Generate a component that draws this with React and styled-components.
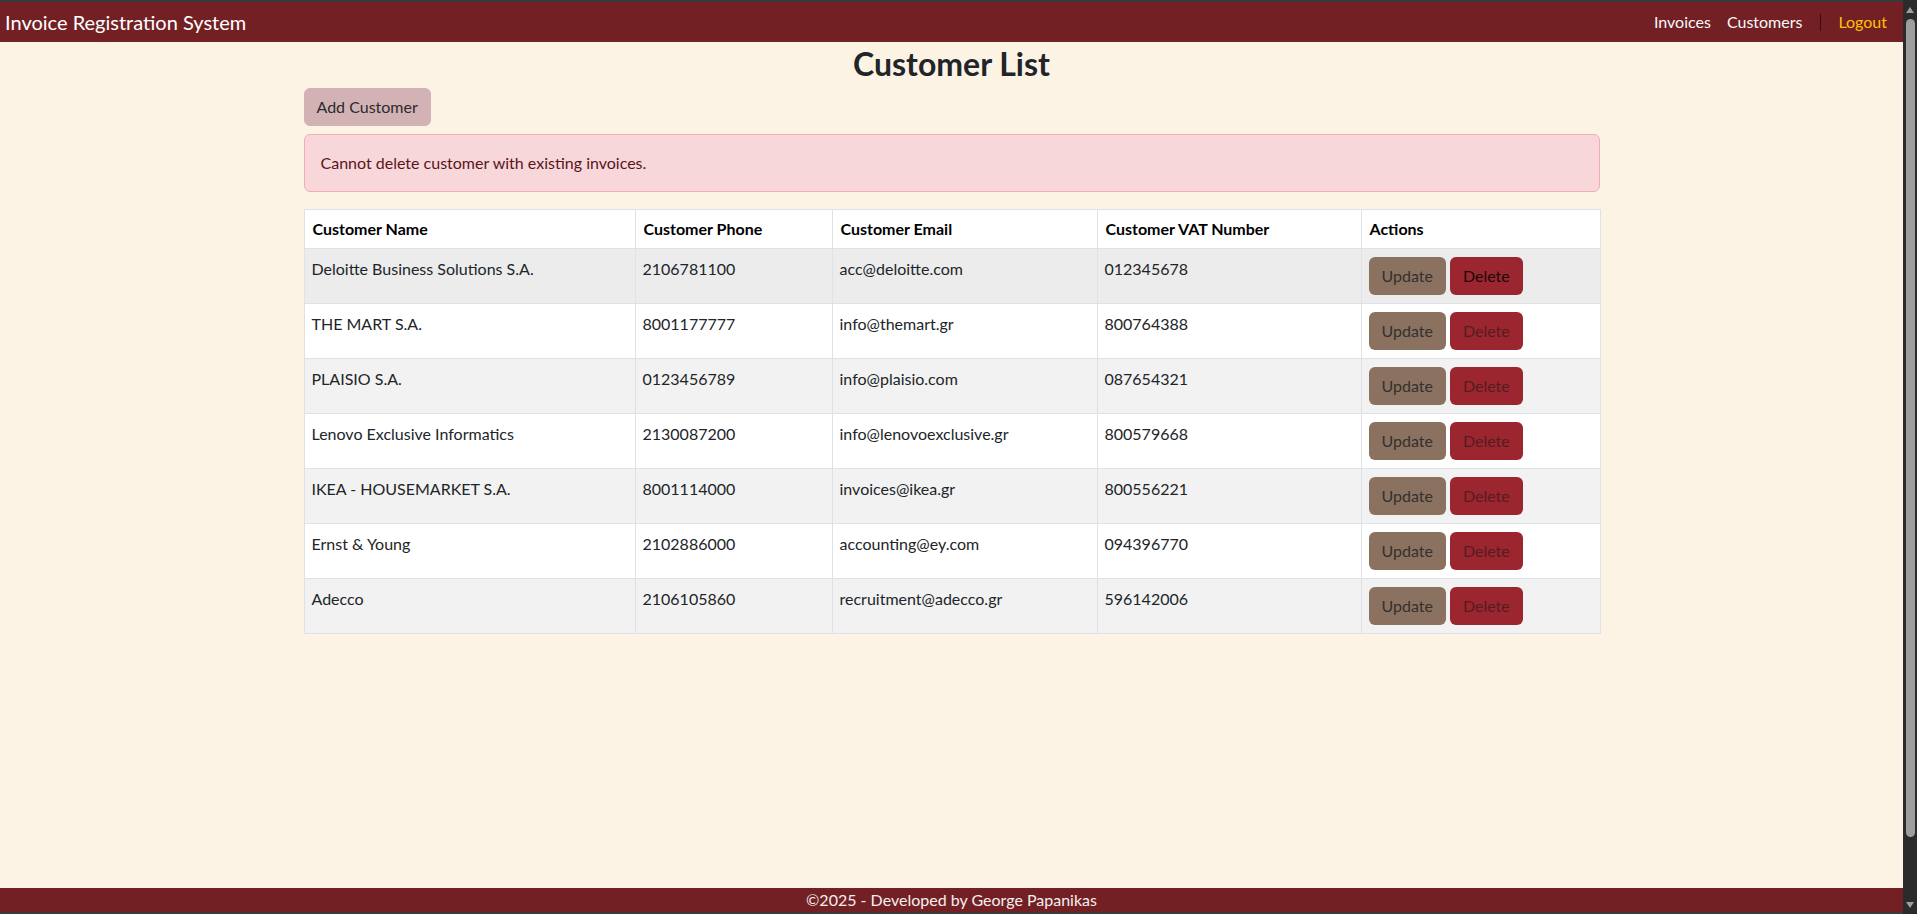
import React from 'react';
import styled, { createGlobalStyle } from 'styled-components';

const GlobalStyle = createGlobalStyle`
  html,
  body {
    margin: 0;
    height: 100%;
    overflow: hidden;
    background: #fdf3e4;
  }
  body {
    color: #212529;
    font-family: Lato, "Liberation Sans", sans-serif;
    font-size: 16px;
    line-height: 1.5;
  }
  * {
    box-sizing: border-box;
  }
`;

const Window = styled.div`
  height: 100vh;
  display: flex;
`;

const Viewport = styled.div`
  flex: 1;
  min-width: 0;
  height: 100%;
  overflow: hidden;
  background: #fdf3e4;
`;

/* the browser's dark scrollbar on the right edge */
const ScrollTrack = styled.aside`
  width: 14px;
  height: 100%;
  padding: 7px 0 6px 3px;
  background: #2b2b2b;
  display: flex;
  flex-direction: column;
`;

const Arrow = styled.span`
  width: 0;
  height: 0;
  border-left: 4px solid transparent;
  border-right: 4px solid transparent;
  ${({ $down }) =>
    $down ? 'border-top: 6px solid #9e9e9e;' : 'border-bottom: 6px solid #9e9e9e;'}
`;

const Thumb = styled.span`
  width: 9px;
  height: 818px;
  margin-top: 6px;
  border-radius: 5px;
  background: #9e9e9e;
`;

const Spacer = styled.span`
  flex: 1;
`;

const Page = styled.div`
  height: 100%;
  display: flex;
  flex-direction: column;
`;

const Navbar = styled.nav`
  height: 42px;
  border-top: 2px solid #3a3a3a;
  background: #732024;
  display: flex;
  align-items: center;
  justify-content: space-between;
  padding: 0 8px 0 5px;
`;

const Brand = styled.span`
  color: #fff;
  font-size: 20px;
  line-height: 30px;
`;

const NavLinks = styled.div`
  display: flex;
  align-items: center;
`;

const NavLink = styled.a`
  color: ${({ $accent }) => ($accent ? '#ffc107' : '#f8f9fa')};
  padding: 0 8px;
  text-decoration: none;
  cursor: pointer;
`;

const Divider = styled.span`
  width: 1px;
  height: 17px;
  margin: 0 9px 0 10px;
  background: rgba(0, 0, 0, 0.55);
`;

const Main = styled.main`
  flex: 1;
  width: 100%;
  max-width: 1320px;
  margin: 0 auto;
  padding: 3px 12px 0;
`;

const Title = styled.h2`
  margin: 0 0 5px;
  text-align: center;
  font-size: 32px;
  font-weight: 700;
  line-height: 38px;
  color: #212529;
`;

const AddButton = styled.button`
  display: inline-block;
  height: 38px;
  padding: 6px 12px;
  margin-bottom: 8px;
  border: 1px solid #d3b2b5;
  border-radius: 6px;
  background: #d3b2b5;
  color: #2b2b2b;
  font: inherit;
  cursor: pointer;
`;

const Alert = styled.div`
  padding: 16px;
  margin-bottom: 17px;
  border: 1px solid #f1aeb5;
  border-radius: 6px;
  background: #f8d7da;
  color: #58151c;
`;

const Table = styled.table`
  width: 100%;
  table-layout: fixed;
  border-collapse: collapse;
  background: #fff;
`;

const Col = styled.col`
  width: ${({ $w }) => $w}px;
`;

const Th = styled.th`
  height: 39px;
  padding: 7px 8px;
  text-align: left;
  font-weight: 700;
  color: #000;
  border: 1px solid #dee2e6;
  vertical-align: middle;
`;

const Row = styled.tr`
  background: ${({ $hover, $striped }) =>
    $hover ? '#ececec' : $striped ? '#f2f2f2' : '#fff'};
`;

const Td = styled.td`
  height: 55px;
  padding: 8px 7px;
  border: 1px solid #dee2e6;
  vertical-align: top;
  color: #212529;
`;

const Actions = styled.div`
  display: flex;
  gap: 4px;
`;

const ActionButton = styled.button`
  height: 38px;
  padding: 6px 13px;
  border: none;
  border-radius: 6px;
  font: inherit;
  cursor: pointer;
  background: ${({ $danger }) => ($danger ? '#9b262f' : '#8b7260')};
  color: ${({ $danger, $active }) =>
    $active ? '#1a0808' : $danger ? '#561c22' : '#33302e'};
`;

const Footer = styled.footer`
  height: 26px;
  background: #732024;
  border-bottom: 2px solid #3a3a3a;
  color: #f3f0f0;
  text-align: center;
  line-height: 24px;
`;

const customers = [
  ['Deloitte Business Solutions S.A.', '2106781100', 'acc@deloitte.com', '012345678'],
  ['THE MART S.A.', '8001177777', 'info@themart.gr', '800764388'],
  ['PLAISIO S.A.', '0123456789', 'info@plaisio.com', '087654321'],
  ['Lenovo Exclusive Informatics', '2130087200', 'info@lenovoexclusive.gr', '800579668'],
  ['IKEA - HOUSEMARKET S.A.', '8001114000', 'invoices@ikea.gr', '800556221'],
  ['Ernst & Young', '2102886000', 'accounting@ey.com', '094396770'],
  ['Adecco', '2106105860', 'recruitment@adecco.gr', '596142006'],
];

const widths = [331, 197, 265, 264, 239];

const App = () => {
  return (
    <Window>
      <GlobalStyle />
      <Viewport>
        <Page>
          <Navbar>
            <Brand>Invoice Registration System</Brand>
            <NavLinks>
              <NavLink>Invoices</NavLink>
              <NavLink>Customers</NavLink>
              <Divider />
              <NavLink $accent>Logout</NavLink>
            </NavLinks>
          </Navbar>

          <Main>
            <Title>Customer List</Title>
            <AddButton>Add Customer</AddButton>
            <Alert>Cannot delete customer with existing invoices.</Alert>

            <Table>
              <colgroup>
                {widths.map((w, i) => (
                  <Col key={i} $w={w} />
                ))}
              </colgroup>
              <thead>
                <tr>
                  <Th>Customer Name</Th>
                  <Th>Customer Phone</Th>
                  <Th>Customer Email</Th>
                  <Th>Customer VAT Number</Th>
                  <Th>Actions</Th>
                </tr>
              </thead>
              <tbody>
                {customers.map(([name, phone, email, vat], i) => (
                  <Row key={vat} $striped={i % 2 === 0} $hover={i === 0}>
                    <Td>{name}</Td>
                    <Td>{phone}</Td>
                    <Td>{email}</Td>
                    <Td>{vat}</Td>
                    <Td>
                      <Actions>
                        <ActionButton>Update</ActionButton>
                        <ActionButton $danger $active={i === 0}>Delete</ActionButton>
                      </Actions>
                    </Td>
                  </Row>
                ))}
              </tbody>
            </Table>
          </Main>

          <Footer>©2025 - Developed by George Papanikas</Footer>
        </Page>
      </Viewport>
      <ScrollTrack>
        <Arrow />
        <Thumb />
        <Spacer />
        <Arrow $down />
      </ScrollTrack>
    </Window>
  );
};

export default App;
